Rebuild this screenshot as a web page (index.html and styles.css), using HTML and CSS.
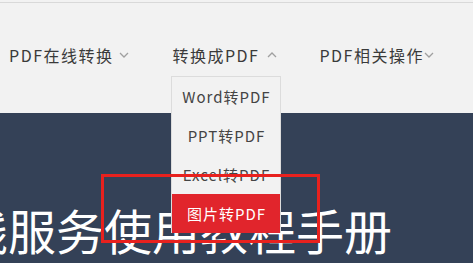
FILE: index.html
```html
<!doctype html>
<html>
  <head>
    <meta charset="utf-8">
    <title>PDF在线服务使用教程手册</title>
    <link rel="stylesheet" href="styles.css">
  </head>
  <body>
    <div class="header">
      <ul class="nav">
        <li class="navitem">
          <span class="navtext">PDF在线转换</span>
          <svg class="chevron" width="10" height="6" viewBox="0 0 10 6"><path d="M1 1 L5 5 L9 1" fill="none" stroke="#a0a0a0" stroke-width="1.3"/></svg>
        </li>
        <li class="navitem navitem-open">
          <span class="navtext">转换成PDF</span>
          <svg class="chevron" width="10" height="6" viewBox="0 0 10 6"><path d="M1 5 L5 1 L9 5" fill="none" stroke="#a0a0a0" stroke-width="1.3"/></svg>
          <ul class="dropdown">
            <li class="dropitem">Word转PDF</li>
            <li class="dropitem">PPT转PDF</li>
            <li class="dropitem">Excel转PDF</li>
            <li class="dropitem dropitem-active">图片转PDF</li>
          </ul>
        </li>
        <li class="navitem navitem-last">
          <span class="navtext">PDF相关操作</span>
          <svg class="chevron" width="10" height="6" viewBox="0 0 10 6"><path d="M1 1 L5 5 L9 1" fill="none" stroke="#a0a0a0" stroke-width="1.3"/></svg>
        </li>
      </ul>
    </div>
    <div class="hero">
      <h1 class="title">线服务使用教程手册</h1>
      <div class="highlight"></div>
    </div>
  </body>
</html>
```
FILE: styles.css
```css
html, body {
  margin: 0;
  padding: 0;
  overflow: hidden;
}
body {
  font-family: "Noto Sans CJK SC", "Noto Sans", sans-serif;
  background-color: #f2f2f2;
}
.header {
  height: 110px;
  margin-top: 2px;
  border-top: 1px solid #d9d9d9;
  background-color: #f2f2f2;
}
.nav {
  display: flex;
  list-style: none;
  margin: 0;
  padding: 37px 0 0 9px;
}
.navitem {
  position: relative;
  display: flex;
  flex-shrink: 0;
  align-items: center;
  height: 30px;
  margin-right: 43px;
  white-space: nowrap;
  color: #3a3a3a;
  font-size: 16px;
  letter-spacing: 1.5px;
}
.navitem-open {
  margin-right: 42px;
}
.navitem-open .chevron {
  margin-left: 8px;
}
.navitem-last {
  margin-right: 0;
}
.chevron {
  margin-left: 6px;
}
.navitem-last .chevron {
  margin-left: 0;
}
.dropdown {
  position: absolute;
  top: 36px;
  left: -1px;
  width: 108px;
  margin: 0;
  padding: 0;
  list-style: none;
  letter-spacing: 1px;
  background-color: #f2f2f2;
  border: 1px solid #dcdcdc;
  border-bottom: none;
  z-index: 2;
}
.dropitem {
  height: 39px;
  line-height: 39px;
  text-align: center;
  font-size: 15px;
  color: #444;
}
.dropitem-active {
  background-color: #e1252c;
  color: #fff;
}
.hero {
  position: relative;
  height: 150px;
  background-color: #344157;
  overflow: hidden;
}
.title {
  margin: 0;
  padding-top: 86px;
  margin-left: -40px;
  white-space: nowrap;
  font-size: 48px;
  font-weight: normal;
  line-height: 60px;
  color: #fff;
}
.highlight {
  position: absolute;
  left: 101px;
  top: 61px;
  width: 213px;
  height: 63px;
  border: 3px solid #e8211e;
  z-index: 3;
}
```
